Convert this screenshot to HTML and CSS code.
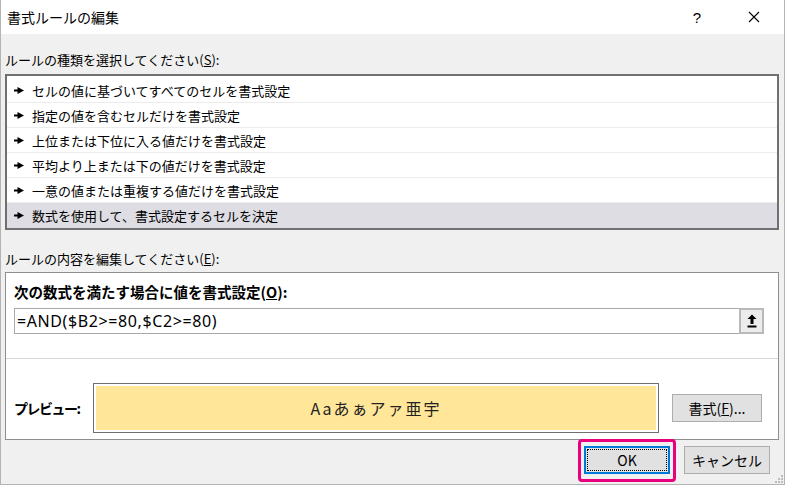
FILE: index.html
```html
<!DOCTYPE html>
<html lang="ja">
<head>
    <meta charset="UTF-8">
    <meta name="viewport" content="width=device-width, initial-scale=1.0">
    <title>書式ルールの編集</title>
    <link rel="stylesheet" href="styles.css">
</head>
<body>
    <div class="window">
        <div class="titlebar">
            <span class="title">書式ルールの編集</span>
            <span class="help">?</span>
            <span class="close">
                <svg width="12" height="12" viewBox="0 0 12 12"><path d="M1 1L11 11M11 1L1 11" stroke="#000" stroke-width="1.1" fill="none"/></svg>
            </span>
        </div>

        <div class="content">
            <div class="label first">ルールの種類を選択してください(<u>S</u>):</div>
            <div class="rule-list">
                <div class="rule"><svg class="pointer" width="10" height="7" viewBox="0 0 10 7"><rect x="0" y="2.5" width="5" height="2" fill="#000"/><path d="M3.5 0L10 3.5L3.5 7Z" fill="#000"/></svg>セルの値に基づいてすべてのセルを書式設定</div>
                <div class="rule"><svg class="pointer" width="10" height="7" viewBox="0 0 10 7"><rect x="0" y="2.5" width="5" height="2" fill="#000"/><path d="M3.5 0L10 3.5L3.5 7Z" fill="#000"/></svg>指定の値を含むセルだけを書式設定</div>
                <div class="rule"><svg class="pointer" width="10" height="7" viewBox="0 0 10 7"><rect x="0" y="2.5" width="5" height="2" fill="#000"/><path d="M3.5 0L10 3.5L3.5 7Z" fill="#000"/></svg>上位または下位に入る値だけを書式設定</div>
                <div class="rule"><svg class="pointer" width="10" height="7" viewBox="0 0 10 7"><rect x="0" y="2.5" width="5" height="2" fill="#000"/><path d="M3.5 0L10 3.5L3.5 7Z" fill="#000"/></svg>平均より上または下の値だけを書式設定</div>
                <div class="rule"><svg class="pointer" width="10" height="7" viewBox="0 0 10 7"><rect x="0" y="2.5" width="5" height="2" fill="#000"/><path d="M3.5 0L10 3.5L3.5 7Z" fill="#000"/></svg>一意の値または重複する値だけを書式設定</div>
                <div class="rule selected"><svg class="pointer" width="10" height="7" viewBox="0 0 10 7"><rect x="0" y="2.5" width="5" height="2" fill="#000"/><path d="M3.5 0L10 3.5L3.5 7Z" fill="#000"/></svg>数式を使用して、書式設定するセルを決定</div>
            </div>

            <div class="label second">ルールの内容を編集してください(<u>E</u>):</div>
            <div class="panel">
                <div class="formula-section">
                    <div class="bold-label">次の数式を満たす場合に値を書式設定(<u>O</u>):</div>
                    <div class="formula-box">
                        <span class="formula">=AND($B2&gt;=80,$C2&gt;=80)</span>
                        <span class="collapse-btn">
                            <svg width="10" height="14" viewBox="0 0 10 14"><path d="M5 0.5L9.5 5H6.5V10H3.5V5H0.5Z" fill="#000"/><rect x="0.5" y="11.5" width="9" height="2" fill="#000"/></svg>
                        </span>
                    </div>
                </div>
                <div class="preview-section">
                    <div class="bold-label preview-label">プレビュー:</div>
                    <div class="preview-box">
                        <div class="preview-fill">Aaあぁアァ亜宇</div>
                    </div>
                    <button class="btn format-btn">書式(<u>F</u>)...</button>
                </div>
            </div>

            <div class="actions">
                <button class="btn ok-btn">OK</button>
                <button class="btn">キャンセル</button>
            </div>
        </div>

        <svg class="grip" width="8" height="8" viewBox="0 0 8 8">
            <rect x="6" y="0" width="2" height="2" fill="#bcbcbc"/>
            <rect x="3" y="3" width="2" height="2" fill="#bcbcbc"/>
            <rect x="6" y="3" width="2" height="2" fill="#bcbcbc"/>
            <rect x="0" y="6" width="2" height="2" fill="#bcbcbc"/>
            <rect x="3" y="6" width="2" height="2" fill="#bcbcbc"/>
            <rect x="6" y="6" width="2" height="2" fill="#bcbcbc"/>
        </svg>
    </div>
</body>
</html>
```

FILE: styles.css
```css
body {
    margin: 0;
    font-family: "Noto Sans CJK JP", "Noto Sans", sans-serif;
    font-size: 13px;
    color: #000;
    background-color: #f0f0f0;
}

.window {
    position: relative;
    width: 785px;
    height: 485px;
    box-sizing: border-box;
    border: 1px solid #b4b4b4;
    border-top: none;
    background-color: #f0f0f0;
}

.titlebar {
    height: 34px;
    background-color: #fff;
    display: flex;
    align-items: center;
    padding-left: 6px;
}

.title {
    flex: 1;
    font-size: 14px;
}

.help {
    font-family: "Liberation Sans", sans-serif;
    font-size: 15px;
    margin-right: 47px;
}

.close {
    display: flex;
    margin-right: 24px;
}

.content {
    padding: 0 5px 0 4px;
}

.label {
    height: 20px;
    line-height: 20px;
    font-size: 13px;
}

.label.first {
    margin-top: 16px;
    margin-bottom: 4px;
}

.label.second {
    margin-top: 19px;
    margin-bottom: 3px;
}

.rule-list {
    border: 2px solid #707070;
    background-color: #fff;
    padding-top: 2px;
}

.rule {
    height: 25px;
    box-sizing: border-box;
    display: flex;
    align-items: center;
    border-bottom: 1px solid #ececec;
    font-size: 13px;
}

.rule.selected {
    background-color: #dddde3;
    border-bottom: none;
}

.pointer {
    margin-left: 7px;
    margin-right: 8px;
}

.panel {
    border: 1px solid #8e8e8e;
    background-color: #fff;
}

.formula-section {
    padding: 9px 14px 24px 8px;
    border-bottom: 1px solid #d7d7d7;
}

.bold-label {
    font-weight: bold;
    font-size: 14.5px;
    height: 20px;
    line-height: 20px;
}

.formula-box {
    margin-top: 6px;
    height: 26px;
    box-sizing: border-box;
    border: 1px solid #a9a9a9;
    display: flex;
    align-items: center;
}

.formula {
    flex: 1;
    padding-left: 2px;
    font-family: "Noto Sans", sans-serif;
    font-size: 16px;
    letter-spacing: 0.6px;
}

.collapse-btn {
    width: 25px;
    height: 26px;
    margin: -1px -1px -1px 0;
    box-sizing: border-box;
    border: 2px solid #b9b9b9;
    background-color: #ececec;
    display: flex;
    align-items: center;
    justify-content: center;
}

.preview-section {
    display: flex;
    align-items: center;
    padding: 24px 14px 6px 8px;
}

.preview-label {
    width: 79px;
    font-size: 14px;
    letter-spacing: -1.5px;
}

.preview-box {
    width: 566px;
    height: 50px;
    box-sizing: border-box;
    border: 1px solid #6f6f6f;
    padding: 2px;
    margin-right: 13px;
}

.preview-fill {
    height: 100%;
    background-color: #ffe699;
    display: flex;
    align-items: center;
    justify-content: center;
    font-size: 16px;
    letter-spacing: 2px;
    color: #222;
}

.btn {
    height: 28px;
    box-sizing: border-box;
    border: 1px solid #adadad;
    background-color: #e1e1e1;
    font-family: "Noto Sans CJK JP", "Noto Sans", sans-serif;
    font-size: 14px;
    color: #000;
    padding: 0;
    width: 86px;
}

.format-btn {
    width: 90px;
}

.actions {
    display: flex;
    justify-content: flex-end;
    gap: 14px;
    margin-top: 6px;
    padding-right: 9px;
}

.ok-btn {
    position: relative;
    border: 2px solid #0078d7;
    outline: 1px dotted #000;
    outline-offset: -4px;
}

.ok-btn::after {
    content: "";
    position: absolute;
    top: -9px;
    bottom: -10px;
    left: -8px;
    right: -8px;
    border: 3px solid #e8007d;
    border-radius: 4px;
}

.grip {
    position: absolute;
    right: 1px;
    bottom: 1px;
}
```
